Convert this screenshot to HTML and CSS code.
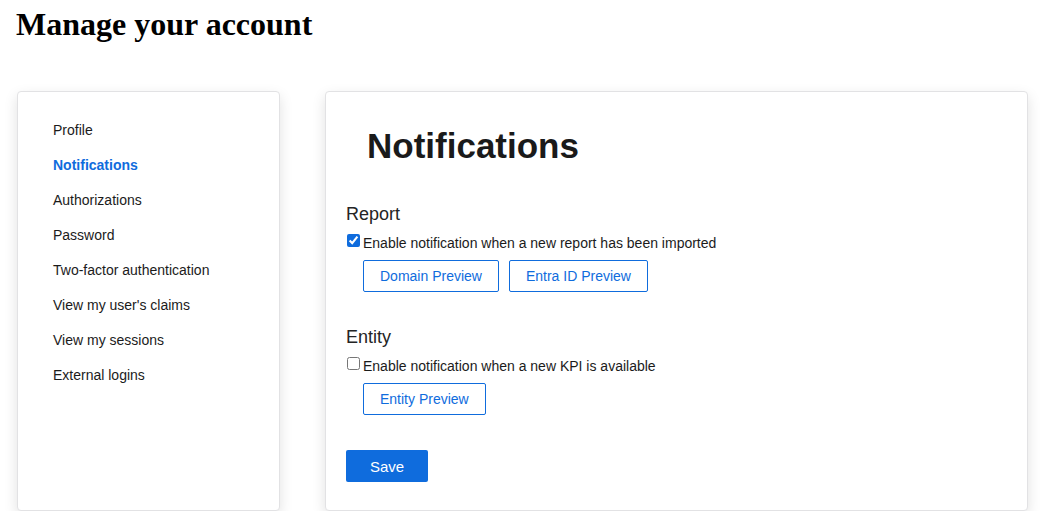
FILE: index.html
```html
<!DOCTYPE html>
<html>
<head>
<meta charset="utf-8">
<link rel="stylesheet" href="styles.css">
</head>
<body>
<div class="page">
  <h1 class="page-title">Manage your account</h1>
  <div class="layout">
    <nav class="card side">
      <ul class="nav">
        <li>Profile</li>
        <li class="active">Notifications</li>
        <li>Authorizations</li>
        <li>Password</li>
        <li>Two-factor authentication</li>
        <li>View my user's claims</li>
        <li>View my sessions</li>
        <li>External logins</li>
      </ul>
    </nav>
    <main class="card content">
      <h2 class="heading">Notifications</h2>
      <section class="section">
        <h3 class="section-title">Report</h3>
        <label class="check-row"><input type="checkbox" checked><span>Enable notification when a new report has been imported</span></label>
        <div class="buttons">
          <button class="btn-outline">Domain Preview</button>
          <button class="btn-outline">Entra ID Preview</button>
        </div>
      </section>
      <section class="section second">
        <h3 class="section-title">Entity</h3>
        <label class="check-row"><input type="checkbox"><span>Enable notification when a new KPI is available</span></label>
        <div class="buttons">
          <button class="btn-outline">Entity Preview</button>
        </div>
      </section>
      <button class="btn-primary">Save</button>
    </main>
  </div>
</div>
</body>
</html>
```

FILE: styles.css
```css
html, body {
  margin: 0;
  padding: 0;
  background: #ffffff;
}

.page {
  padding: 0 16px;
}

.page-title {
  margin: 6px 0 0;
  font-family: "Liberation Serif", "Times New Roman", serif;
  font-size: 32px;
  font-weight: bold;
  line-height: 37px;
  color: #000;
}

.layout {
  display: grid;
  grid-template-columns: 263px 703px;
  column-gap: 45px;
  margin-top: 48px;
  margin-left: 1px;
}

.card {
  background: #fff;
  border: 1px solid #e2e2e4;
  border-radius: 4px;
  box-shadow: 0 5px 14px rgba(0, 0, 0, 0.12);
  font-family: "Liberation Sans", Arial, sans-serif;
  color: #1b1b1b;
}

.nav {
  list-style: none;
  margin: 0;
  padding: 21px 35px 0;
}

.nav li {
  font-size: 14px;
  line-height: 35px;
  color: #1b1b1b;
}

.nav li.active {
  color: #0f6cdd;
  font-weight: bold;
}

.content {
  padding: 0 20px 28px;
}

.heading {
  margin: 34px 0 0 21px;
  font-size: 35px;
  line-height: 40px;
  font-weight: bold;
  color: #1a1a1a;
}

.section {
  margin-top: 37px;
}

.section.second {
  margin-top: 34px;
}

.section-title {
  margin: 0;
  font-size: 18px;
  line-height: 22px;
  font-weight: normal;
  color: #242424;
}

.check-row {
  display: flex;
  align-items: center;
  height: 20px;
  margin-top: 5px;
  font-size: 14px;
  color: #1b1b1b;
}

.check-row input {
  width: 13px;
  height: 13px;
  margin: 1px 3px 0 1px;
  accent-color: #0f6cdd;
}

.check-row span {
  padding-top: 6px;
}

.buttons {
  display: flex;
  gap: 10px;
  margin: 10px 0 0 17px;
}

.btn-outline {
  height: 32px;
  padding: 0 16px;
  border: 1px solid #0f6cdd;
  border-radius: 2px;
  background: #fff;
  color: #0f6cdd;
  font-family: "Liberation Sans", Arial, sans-serif;
  font-size: 14px;
}

.btn-primary {
  display: block;
  margin-top: 35px;
  width: 82px;
  height: 32px;
  border: none;
  border-radius: 2px;
  background: #0f6cdd;
  color: #fff;
  font-family: "Liberation Sans", Arial, sans-serif;
  font-size: 15px;
}
```
